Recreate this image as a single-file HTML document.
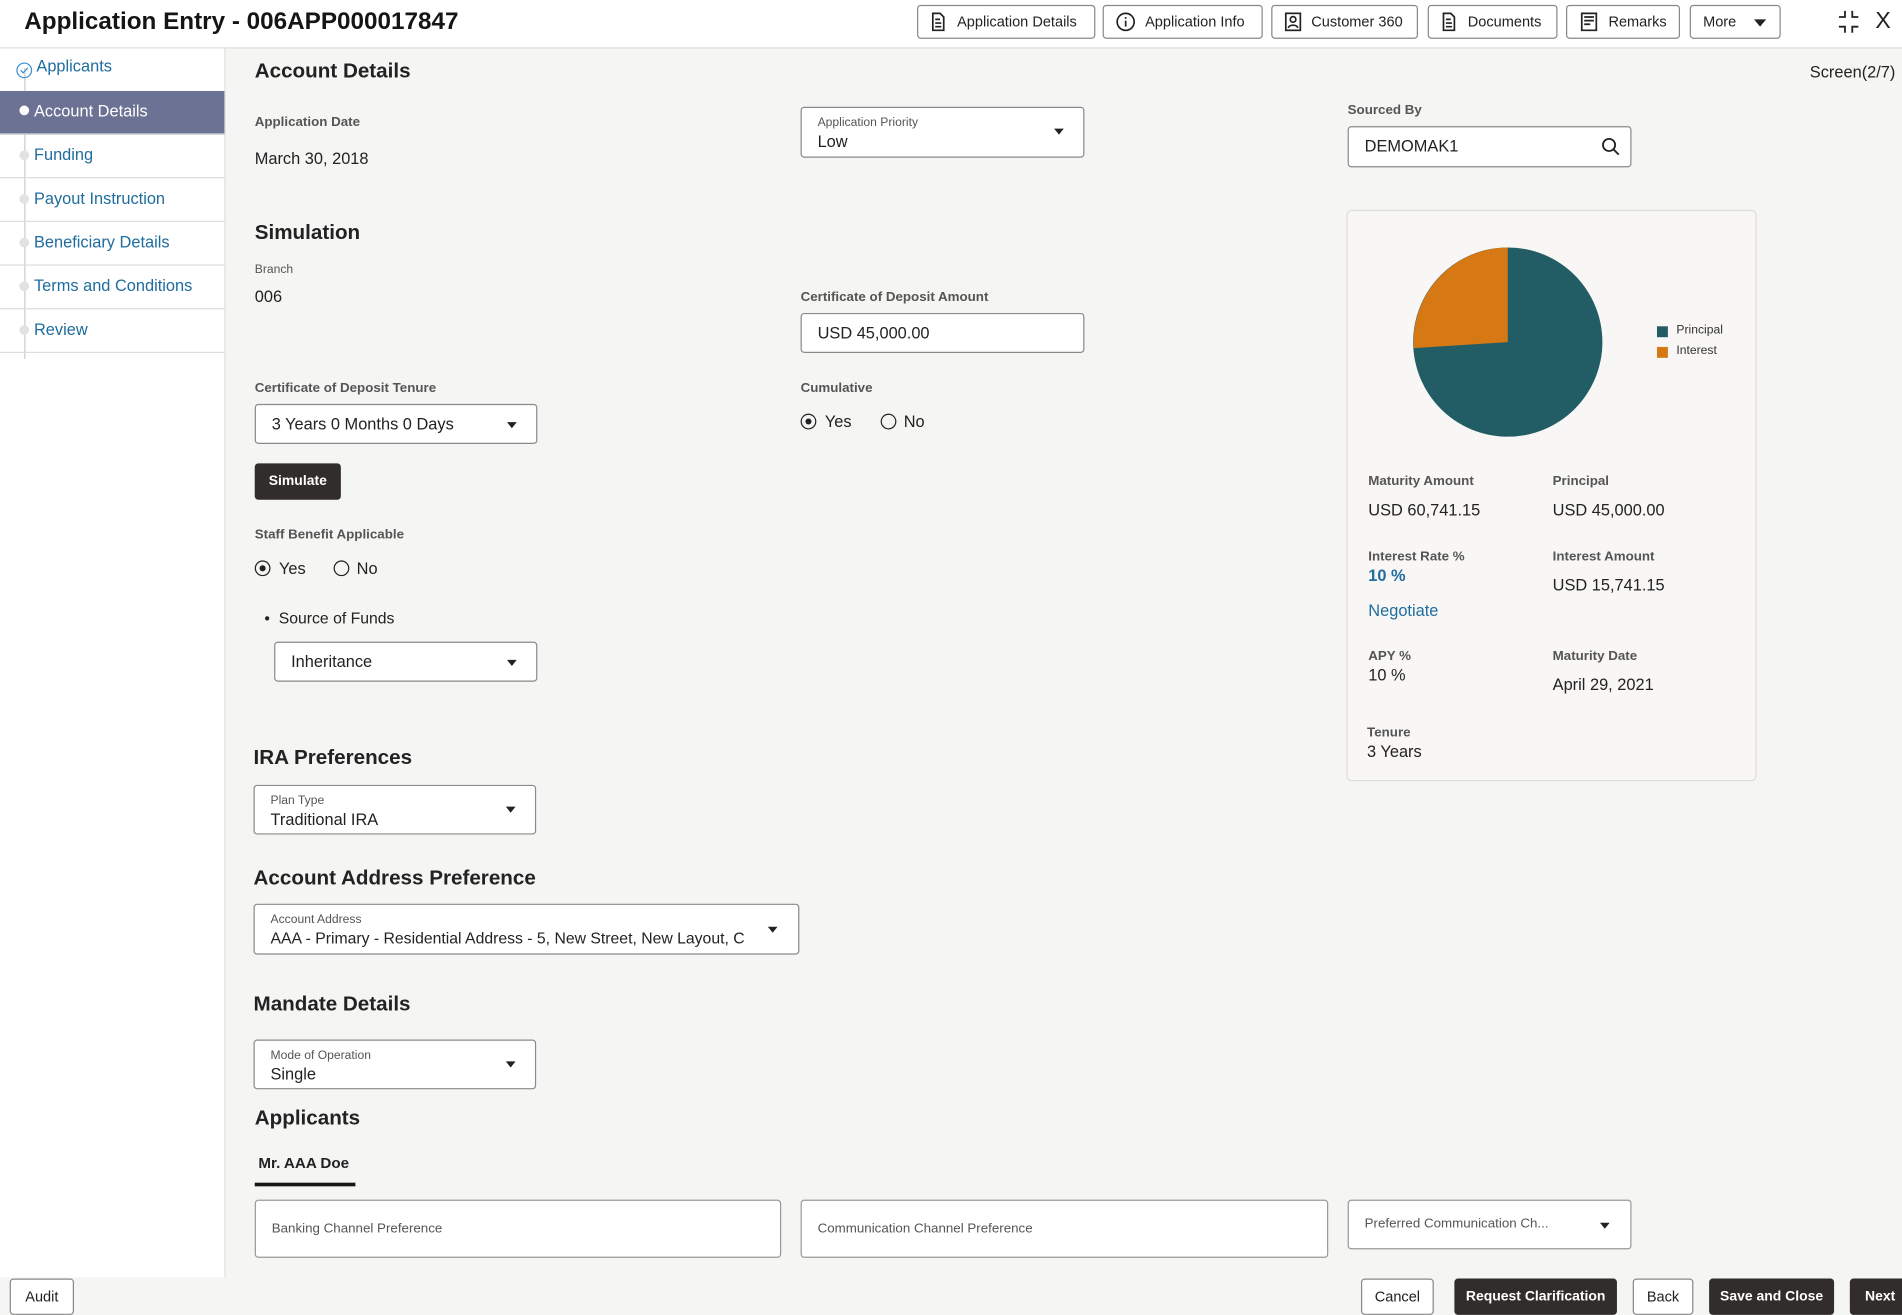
<!DOCTYPE html>
<html><head><meta charset="utf-8">
<style>
*{box-sizing:border-box;margin:0;padding:0}
html,body{width:1902px;height:1315px;overflow:hidden;background:#f4f4f2}
#w{position:absolute;left:0;top:0;width:1568px;height:1084px;transform:scale(1.21301);transform-origin:0 0;font-family:"Liberation Sans",sans-serif;color:#222;background:#f5f5f3}
.a{position:absolute;white-space:nowrap}
.hdr{left:0;top:0;width:1568px;height:40px;background:#fff;border-bottom:1px solid #ddd}
.btn{position:absolute;top:4px;height:28px;border:1px solid #888;border-radius:3px;background:#fff;font-size:12px;display:flex;align-items:center;padding-left:10px;gap:8px;color:#222}
.side{left:0;top:40px;width:186px;height:1013px;background:#fff;border-right:1px solid #ddd}
.it{position:absolute;left:0;width:185px;height:36px;border-bottom:1px solid #ddd;font-size:13.5px;color:#1f6c9e;padding-left:28px;line-height:34px}
.it.sel{background:#6b7293;color:#fff}
.dot{position:absolute;left:16px;top:13px;width:8px;height:8px;border-radius:50%;background:#e2e2e2}
.lbl{font-size:11px;font-weight:bold;color:#555}
.val{font-size:13.5px;color:#222}
.h{font-size:17px;font-weight:bold;color:#222}
.box{position:absolute;background:#fff;border:1px solid #8a8a8a;border-radius:3px}
.tri{position:absolute;width:0;height:0;border-left:4.5px solid transparent;border-right:4.5px solid transparent;border-top:5px solid #222}
.sl{font-size:10px;color:#555;position:absolute;left:13px;top:7px}
.sv{font-size:13.5px;color:#222;position:absolute;left:13px;top:20px}
.rad{position:absolute;width:13px;height:13px;border:1.3px solid #222;border-radius:50%}
.rad.on::after{content:"";position:absolute;left:2.5px;top:2.5px;width:5.5px;height:5.5px;border-radius:50%;background:#222}
.fb{position:absolute;top:1054px;height:30px;border:1px solid #888;border-radius:3px;background:#fff;font-size:12px;display:flex;align-items:center;justify-content:center}
.fb.d{background:#312d2a;color:#fff;border-color:#312d2a;font-weight:bold;font-size:11.5px}
</style></head><body><div id="w">
<div class="a hdr"></div>
<div class="a" style="left:20px;top:7px;font-size:20px;font-weight:bold;color:#161513">Application Entry - 006APP000017847</div>
<div class="btn" style="left:756px;width:147px"><svg width="14" height="16" viewBox="0 0 14 16" fill="none" stroke="#222" stroke-width="1.4"><path d="M2 1h6l3 3v11H2z"/><path d="M4 6h4M4 9h5M4 12h5"/></svg>Application Details</div>
<div class="btn" style="left:909px;width:132px"><svg width="16" height="16" viewBox="0 0 16 16" fill="none" stroke="#222" stroke-width="1.4"><circle cx="8" cy="8" r="7"/><path d="M8 7v5M8 4v1.5"/></svg>Application Info</div>
<div class="btn" style="left:1048px;width:121px"><svg width="14" height="16" viewBox="0 0 14 16" fill="none" stroke="#222" stroke-width="1.4"><rect x="1" y="1" width="12" height="14"/><circle cx="7" cy="6" r="2.3"/><path d="M3 13c1-3 7-3 8 0"/></svg>Customer 360</div>
<div class="btn" style="left:1177px;width:107px"><svg width="14" height="16" viewBox="0 0 14 16" fill="none" stroke="#222" stroke-width="1.4"><path d="M2 1h6l3 3v11H2z"/><path d="M4 6h4M4 9h5M4 12h5"/></svg>Documents</div>
<div class="btn" style="left:1291px;width:94px"><svg width="16" height="16" viewBox="0 0 16 16" fill="none" stroke="#222" stroke-width="1.4"><path d="M2 1h12v14H2z"/><path d="M4 4h8M4 7h8M4 10h5"/></svg>Remarks</div>
<div class="btn" style="left:1393px;width:75px">More<span class="tri" style="left:52px;top:11px;border-left-width:5px;border-right-width:5px;border-top-width:6px"></span></div>
<svg class="a" style="left:1514px;top:8px" width="20" height="20" viewBox="0 0 20 20" fill="none" stroke="#222" stroke-width="1.5"><path d="M7 1v5H2M13 1v5h5M7 19v-5H2M13 19v-5h5"/></svg>
<div class="a" style="left:1546px;top:7px;font-size:19px">X</div>

<div class="a side"></div>
<div class="a" style="left:20px;top:56px;width:1px;height:240px;background:#ccc"></div>
<div class="it" style="top:40px;height:35px;border-bottom:none;line-height:30px;padding-left:30px">Applicants<svg style="position:absolute;left:13px;top:11px" width="14" height="14" viewBox="0 0 14 14" fill="none" stroke="#3a8ccc" stroke-width="1"><circle cx="7" cy="7" r="6"/><path d="M4 7l2 2 4-4"/></svg></div>
<div class="it sel" style="top:75px"><span class="dot" style="background:#fff;top:12px"></span>Account Details</div>
<div class="it" style="top:111px"><span class="dot"></span>Funding</div>
<div class="it" style="top:147px"><span class="dot"></span>Payout Instruction</div>
<div class="it" style="top:183px"><span class="dot"></span>Beneficiary Details</div>
<div class="it" style="top:219px"><span class="dot"></span>Terms and Conditions</div>
<div class="it" style="top:255px"><span class="dot"></span>Review</div>

<div class="a h" style="left:210px;top:49px">Account Details</div>
<div class="a" style="left:1492px;top:52px;font-size:13.5px">Screen(2/7)</div>
<div class="a lbl" style="left:210px;top:95px">Application Date</div>
<div class="a val" style="left:210px;top:123px">March 30, 2018</div>
<div class="box" style="left:660px;top:88px;width:234px;height:42px"><span class="sl">Application Priority</span><span class="sv">Low</span><span class="tri" style="left:208px;top:17px"></span></div>
<div class="a lbl" style="left:1111px;top:85px">Sourced By</div>
<div class="box" style="left:1111px;top:104px;width:234px;height:34px"><span class="sv" style="top:8px">DEMOMAK1</span><svg style="position:absolute;left:208px;top:8px" width="16" height="16" viewBox="0 0 16 16" fill="none" stroke="#222" stroke-width="1.5"><circle cx="6.5" cy="6.5" r="5"/><path d="M10 10l4.5 4.5"/></svg></div>

<div class="a h" style="left:210px;top:182px">Simulation</div>
<div class="a" style="left:210px;top:217px;font-size:10px;color:#555">Branch</div>
<div class="a val" style="left:210px;top:237px">006</div>
<div class="a lbl" style="left:660px;top:239px">Certificate of Deposit Amount</div>
<div class="box" style="left:660px;top:258px;width:234px;height:33px"><span class="sv" style="top:8px">USD 45,000.00</span></div>
<div class="a lbl" style="left:210px;top:314px">Certificate of Deposit Tenure</div>
<div class="box" style="left:210px;top:333px;width:233px;height:33px"><span class="sv" style="top:8px">3 Years 0 Months 0 Days</span><span class="tri" style="left:207px;top:14px"></span></div>
<div class="a lbl" style="left:660px;top:314px">Cumulative</div>
<div class="rad on" style="left:660px;top:341px"></div><div class="a val" style="left:680px;top:340px">Yes</div>
<div class="rad" style="left:726px;top:341px"></div><div class="a val" style="left:745px;top:340px">No</div>
<div class="a" style="left:210px;top:382px;width:71px;height:30px;background:#312d2a;border-radius:3px;color:#fff;font-size:11.5px;font-weight:bold;text-align:center;line-height:30px">Simulate</div>
<div class="a lbl" style="left:210px;top:435px">Staff Benefit Applicable</div>
<div class="rad on" style="left:210px;top:462px"></div><div class="a val" style="left:230px;top:461px">Yes</div>
<div class="rad" style="left:275px;top:462px"></div><div class="a val" style="left:294px;top:461px">No</div>
<div class="a" style="left:218px;top:502px;font-size:13px">•&nbsp; Source of Funds</div>
<div class="box" style="left:226px;top:529px;width:217px;height:33px"><span class="sv" style="top:8px">Inheritance</span><span class="tri" style="left:191px;top:14px"></span></div>

<div class="a h" style="left:209px;top:615px">IRA Preferences</div>
<div class="box" style="left:209px;top:647px;width:233px;height:41px"><span class="sl">Plan Type</span><span class="sv">Traditional IRA</span><span class="tri" style="left:207px;top:17px"></span></div>
<div class="a h" style="left:209px;top:714px">Account Address Preference</div>
<div class="box" style="left:209px;top:745px;width:450px;height:42px"><span class="sl">Account Address</span><span class="sv" style="width:395px;overflow:hidden;font-size:13px">AAA - Primary - Residential Address - 5, New Street, New Layout, C</span><span class="tri" style="left:423px;top:18px"></span></div>
<div class="a h" style="left:209px;top:818px">Mandate Details</div>
<div class="box" style="left:209px;top:857px;width:233px;height:41px"><span class="sl">Mode of Operation</span><span class="sv">Single</span><span class="tri" style="left:207px;top:17px"></span></div>

<div class="a h" style="left:210px;top:912px">Applicants</div>
<div class="a" style="left:213px;top:952px;font-size:12.5px;font-weight:bold">Mr. AAA Doe</div>
<div class="a" style="left:210px;top:975px;width:83px;height:3px;background:#161513"></div>
<div class="box" style="left:210px;top:989px;width:434px;height:48px;border-color:#999"><span class="a" style="left:13px;top:17px;font-size:11px;color:#555">Banking Channel Preference</span></div>
<div class="box" style="left:660px;top:989px;width:435px;height:48px;border-color:#999"><span class="a" style="left:13px;top:17px;font-size:11px;color:#555">Communication Channel Preference</span></div>
<div class="box" style="left:1111px;top:989px;width:234px;height:41px;border-color:#999"><span class="a" style="left:13px;top:13px;font-size:11px;color:#555">Preferred Communication Ch...</span><span class="tri" style="left:207px;top:18px"></span></div>

<div class="a" style="left:1110px;top:173px;width:338px;height:471px;background:#f8f7f5;border:1px solid #ddd;border-radius:4px"></div>
<svg class="a" style="left:1164px;top:203px" width="160" height="160" viewBox="0 0 160 160"><circle cx="79" cy="79" r="78" fill="#225d66"/><path d="M79 79V1A78 78 0 0 0 1.5 84Z" fill="#d67914"/></svg>
<div class="a" style="left:1366px;top:269px;width:9px;height:9px;background:#225d66"></div><div class="a" style="left:1382px;top:267px;font-size:10px;color:#333">Principal</div>
<div class="a" style="left:1366px;top:286px;width:9px;height:9px;background:#d67914"></div><div class="a" style="left:1382px;top:284px;font-size:10px;color:#333">Interest</div>
<div class="a lbl" style="left:1128px;top:391px">Maturity Amount</div><div class="a val" style="left:1128px;top:413px">USD 60,741.15</div>
<div class="a lbl" style="left:1280px;top:391px">Principal</div><div class="a val" style="left:1280px;top:413px">USD 45,000.00</div>
<div class="a lbl" style="left:1128px;top:453px">Interest Rate %</div><div class="a" style="left:1128px;top:467px;font-size:13.5px;font-weight:bold;color:#1f6c9e">10 %</div>
<div class="a lbl" style="left:1280px;top:453px">Interest Amount</div><div class="a val" style="left:1280px;top:475px">USD 15,741.15</div>
<div class="a" style="left:1128px;top:496px;font-size:13.5px;color:#1f6c9e">Negotiate</div>
<div class="a lbl" style="left:1128px;top:535px">APY %</div><div class="a val" style="left:1128px;top:549px">10 %</div>
<div class="a lbl" style="left:1280px;top:535px">Maturity Date</div><div class="a val" style="left:1280px;top:557px">April 29, 2021</div>
<div class="a lbl" style="left:1127px;top:598px">Tenure</div><div class="a val" style="left:1127px;top:612px">3 Years</div>

<div class="fb" style="left:8px;width:53px">Audit</div>
<div class="fb" style="left:1122px;width:60px">Cancel</div>
<div class="fb d" style="left:1199px;width:134px">Request Clarification</div>
<div class="fb" style="left:1346px;width:50px">Back</div>
<div class="fb d" style="left:1409px;width:103px">Save and Close</div>
<div class="fb d" style="left:1525px;width:50px">Next</div>
</div></body></html>
